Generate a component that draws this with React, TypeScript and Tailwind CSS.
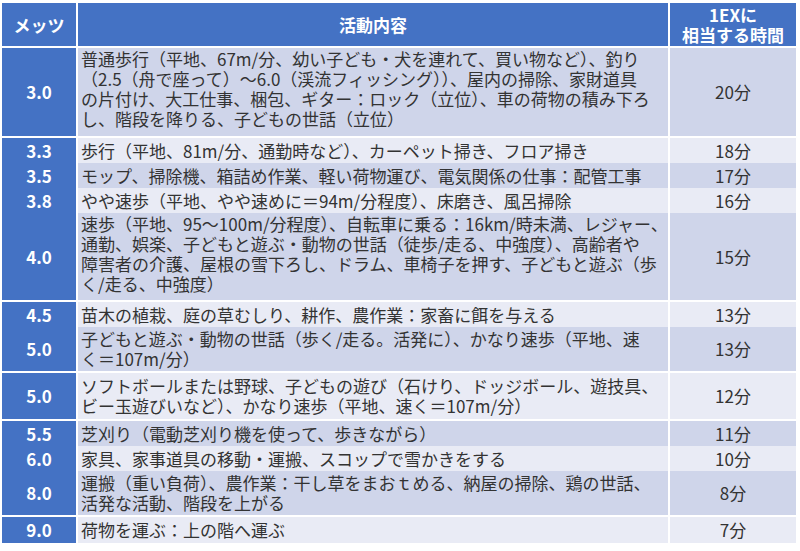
const rows: { mets: string; lines: string[]; time: string; h: string; dark: boolean }[] = [
    {
        mets: '3.0',
        lines: [
            '普通歩行（平地、67m/分、幼い子ども・犬を連れて、買い物など）、釣り',
            '（2.5（舟で座って）～6.0（渓流フィッシング））、屋内の掃除、家財道具',
            'の片付け、大工仕事、梱包、ギター：ロック（立位）、車の荷物の積み下ろ',
            'し、階段を降りる、子どもの世話（立位）',
        ],
        time: '20分',
        h: 'h-[88px]',
        dark: true,
    },
    { mets: '3.3', lines: ['歩行（平地、81m/分、通勤時など）、カーペット掃き、フロア掃き'], time: '18分', h: 'h-[23px]', dark: false },
    { mets: '3.5', lines: ['モップ、掃除機、箱詰め作業、軽い荷物運び、電気関係の仕事：配管工事'], time: '17分', h: 'h-[23px]', dark: true },
    { mets: '3.8', lines: ['やや速歩（平地、やや速めに＝94m/分程度）、床磨き、風呂掃除'], time: '16分', h: 'h-[23px]', dark: false },
    {
        mets: '4.0',
        lines: [
            '速歩（平地、95～100m/分程度）、自転車に乗る：16km/時未満、レジャー、',
            '通勤、娯楽、子どもと遊ぶ・動物の世話（徒歩/走る、中強度）、高齢者や',
            '障害者の介護、屋根の雪下ろし、ドラム、車椅子を押す、子どもと遊ぶ（歩',
            'く/走る、中強度）',
        ],
        time: '15分',
        h: 'h-[87px]',
        dark: true,
    },
    { mets: '4.5', lines: ['苗木の植栽、庭の草むしり、耕作、農作業：家畜に餌を与える'], time: '13分', h: 'h-[23px]', dark: false },
    {
        mets: '5.0',
        lines: ['子どもと遊ぶ・動物の世話（歩く/走る。活発に）、かなり速歩（平地、速', 'く＝107m/分）'],
        time: '13分',
        h: 'h-[44px]',
        dark: true,
    },
    {
        mets: '5.0',
        lines: ['ソフトボールまたは野球、子どもの遊び（石けり、ドッジボール、遊技具、', 'ビー玉遊びいなど）、かなり速歩（平地、速く＝107m/分）'],
        time: '12分',
        h: 'h-[46px]',
        dark: false,
    },
    { mets: '5.5', lines: ['芝刈り（電動芝刈り機を使って、歩きながら）'], time: '11分', h: 'h-[23px]', dark: true },
    { mets: '6.0', lines: ['家具、家事道具の移動・運搬、スコップで雪かきをする'], time: '10分', h: 'h-[23px]', dark: false },
    {
        mets: '8.0',
        lines: ['運搬（重い負荷）、農作業：干し草をまおｔめる、納屋の掃除、鶏の世話、', '活発な活動、階段を上がる'],
        time: '8分',
        h: 'h-[44px]',
        dark: true,
    },
    { mets: '9.0', lines: ['荷物を運ぶ：上の階へ運ぶ'], time: '7分', h: 'h-[25px]', dark: false },
];

const font = { fontFamily: '"Noto Sans CJK JP", "Noto Sans", sans-serif' };

export default function App() {
    return (
        <div className="w-[800px] h-[551px] bg-white pt-[3px] pl-[2px]" style={font}>
            <div className="w-[794px] flex flex-col gap-[2px]">
                <div className="grid grid-cols-[74px_590px_126px] gap-[2px] h-[43px] text-white font-bold text-[17px]">
                    <div className="bg-[#4472c4] flex items-center justify-center">メッツ</div>
                    <div className="bg-[#4472c4] flex items-center justify-center">活動内容</div>
                    <div className="bg-[#4472c4] flex flex-col items-center justify-center leading-[20px]">
                        <span>1EXに</span>
                        <span>相当する時間</span>
                    </div>
                </div>
                {rows.map((r, i) => {
                    const bg = r.dark ? 'bg-[#cfd5ea]' : 'bg-[#e9ebf5]';
                    return (
                        <div key={i} className={`grid grid-cols-[74px_590px_126px] gap-[2px] ${r.h}`}>
                            <div className="bg-[#4472c4] flex items-center justify-center text-white font-bold text-[17px]">
                                {r.mets}
                            </div>
                            <div
                                className={`${bg} pl-[3px] text-[17px] leading-[20px] text-[#333333] whitespace-nowrap flex flex-col ${
                                    r.lines.length > 2 ? 'pt-[1px]' : 'justify-center'
                                }`}
                            >
                                {r.lines.map((l, j) => (
                                    <span key={j}>{l}</span>
                                ))}
                            </div>
                            <div className={`${bg} flex items-center justify-center text-[17px] text-[#333333]`}>
                                {r.time}
                            </div>
                        </div>
                    );
                })}
            </div>
        </div>
    );
}
